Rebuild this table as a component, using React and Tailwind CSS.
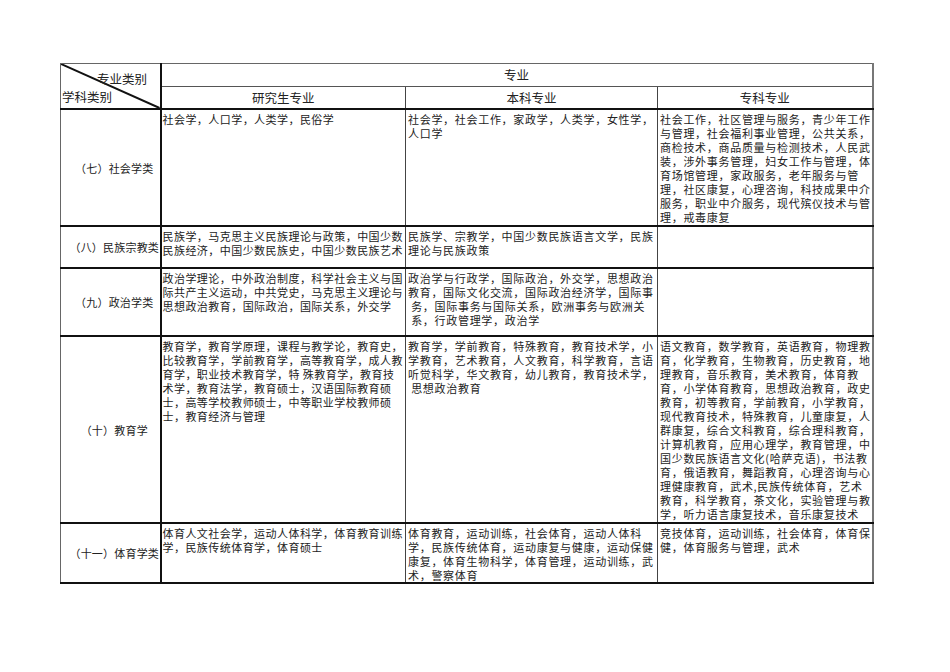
import React from 'react'

const FONT = { fontFamily: '"Noto Sans CJK SC", "Noto Sans", sans-serif' }

const rows = [
  {
    label: '（七）社会学类',
    h: 'h-[117px]',
    cols: [
      ['社会学，人口学，人类学，民俗学'],
      ['社会学，社会工作，家政学，人类学，女性学，', '人口学'],
      [
        '社会工作，社区管理与服务，青少年工作',
        '与管理，社会福利事业管理，公共关系，',
        '商检技术，商品质量与检测技术，人民武',
        '装，涉外事务管理，妇女工作与管理，体',
        '育场馆管理，家政服务，老年服务与管',
        '理，社区康复，心理咨询，科技成果中介',
        '服务，职业中介服务，现代殡仪技术与管',
        '理，戒毒康复',
      ],
    ],
  },
  {
    label: '（八）民族宗教类',
    h: 'h-[42px]',
    cols: [
      ['民族学，马克思主义民族理论与政策，中国少数', '民族经济，中国少数民族史，中国少数民族艺术'],
      ['民族学、宗教学，中国少数民族语言文学，民族', '理论与民族政策'],
      [],
    ],
  },
  {
    label: '（九）政治学类',
    h: 'h-[68px]',
    cols: [
      [
        '政治学理论，中外政治制度，科学社会主义与国',
        '际共产主义运动，中共党史，马克思主义理论与',
        '思想政治教育，国际政治，国际关系，外交学',
      ],
      [
        '政治学与行政学，国际政治，外交学，思想政治',
        '教育，国际文化交流，国际政治经济学，国际事',
        ' 务，国际事务与国际关系，欧洲事务与欧洲关',
        ' 系，行政管理学，政治学',
      ],
      [],
    ],
  },
  {
    label: '（十）教育学',
    h: 'h-[187px]',
    cols: [
      [
        '教育学，教育学原理，课程与教学论，教育史，',
        '比较教育学，学前教育学，高等教育学，成人教',
        '育学，职业技术教育学，特 殊教育学，教育技',
        '术学，教育法学，教育硕士，汉语国际教育硕',
        '士，高等学校教师硕士，中等职业学校教师硕',
        '士，教育经济与管理',
      ],
      [
        '教育学，学前教育，特殊教育，教育技术学，小',
        '学教育，艺术教育，人文教育，科学教育，言语',
        '听觉科学，华文教育，幼儿教育，教育技术学，',
        ' 思想政治教育',
      ],
      [
        '语文教育，数学教育，英语教育，物理教',
        '育，化学教育，生物教育，历史教育，地',
        '理教育，音乐教育，美术教育，体育教',
        '育，小学体育教育，思想政治教育，政史',
        '教育，初等教育，学前教育，小学教育，',
        '现代教育技术，特殊教育，儿童康复，人',
        '群康复，综合文科教育，综合理科教育，',
        '计算机教育，应用心理学，教育管理，中',
        '国少数民族语言文化(哈萨克语)，书法教',
        '育，俄语教育，舞蹈教育，心理咨询与心',
        '理健康教育，武术,民族传统体育，艺术',
        '教育，科学教育，茶文化，实验管理与教',
        '学，听力语言康复技术，音乐康复技术',
      ],
    ],
  },
  {
    label: '（十一）体育学类',
    h: 'h-[58px]',
    cols: [
      ['体育人文社会学，运动人体科学，体育教育训练', '学，民族传统体育学，体育硕士'],
      [
        '体育教育，运动训练，社会体育，运动人体科',
        '学，民族传统体育，运动康复与健康，运动保健',
        '康复，体育生物科学，体育管理，运动训练，武',
        '术，警察体育',
      ],
      ['竞技体育，运动训练，社会体育，体育保', '健，体育服务与管理，武术'],
    ],
  },
]

function Lines({ lines, narrow }) {
  return (
    <div
      className={
        'overflow-hidden pt-[2px] text-[11px] leading-[14px] text-[#222] ' +
        (narrow ? 'pl-[1px] tracking-[0.45px]' : 'pl-[2px] tracking-[0.7px]')
      }
    >
      {lines.map((l, i) => (
        <div key={i} className="whitespace-pre">
          {l}
        </div>
      ))}
    </div>
  )
}

export default function App() {
  return (
    <div className="min-h-[672px] w-[950px] bg-white pl-[60px] pt-[63px]" style={FONT}>
      <table className="w-[812px] table-fixed border-collapse border-t border-l border-t-[#666] border-l-[#666] border-r-2 border-r-[#777] border-b-2 border-b-[#111]">
        <colgroup>
          <col className="w-[100px]" />
          <col className="w-[245px]" />
          <col className="w-[252px]" />
          <col className="w-[215px]" />
        </colgroup>
        <tbody>
          <tr className="h-[23px]">
            <td rowSpan={2} className="relative border-r-2 border-b-2 border-[#111] p-0 align-top">
              <div className="relative h-[44px] w-full">
                <svg className="absolute inset-0 h-full w-full" preserveAspectRatio="none" viewBox="0 0 100 44">
                  <line x1="0" y1="0" x2="100" y2="44" stroke="#111" strokeWidth="2" vectorEffect="non-scaling-stroke" />
                </svg>
                <span className="absolute left-[36px] top-[7px] text-[12.5px] leading-[16px] text-[#222]">专业类别</span>
                <span className="absolute left-[1px] top-[25px] text-[12.5px] leading-[16px] text-[#222]">学科类别</span>
              </div>
            </td>
            <td colSpan={3} className="border-b border-[#555] p-0 text-center text-[12.5px] leading-[16px] text-[#222]">
              专业
            </td>
          </tr>
          <tr className="h-[22px]">
            <td className="border-b-2 border-b-[#111] border-r border-r-[#444] p-0 text-center text-[12.5px] leading-[16px] text-[#222]">
              研究生专业
            </td>
            <td className="border-b-2 border-b-[#111] border-r border-r-[#444] p-0 text-center text-[12.5px] leading-[16px] text-[#222]">
              本科专业
            </td>
            <td className="border-b-2 border-b-[#111] p-0 text-center text-[12.5px] leading-[16px] text-[#222]">
              专科专业
            </td>
          </tr>
          {rows.map((r) => (
            <tr key={r.label} className={r.h}>
              <td className="border-r-2 border-b-2 border-[#111] p-0 pl-[8px] text-center align-middle text-[11px] leading-[14px] tracking-[0.2px] text-[#222] whitespace-nowrap">
                {r.label}
              </td>
              <td className="border-b-2 border-b-[#111] border-r border-r-[#444] p-0 align-top">
                <Lines lines={r.cols[0]} narrow />
              </td>
              <td className="border-b-2 border-b-[#111] border-r border-r-[#444] p-0 align-top">
                <Lines lines={r.cols[1]} />
              </td>
              <td className="border-b-2 border-b-[#111] p-0 align-top">
                <Lines lines={r.cols[2]} />
              </td>
            </tr>
          ))}
        </tbody>
      </table>
    </div>
  )
}
